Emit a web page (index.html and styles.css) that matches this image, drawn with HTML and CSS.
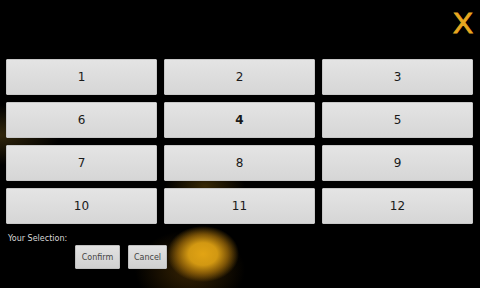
FILE: index.html
```html
<!DOCTYPE html>
<html>
<head>
  <title>Select Number</title>
  <link rel="stylesheet" href="styles.css">
</head>
<body>
  <div id="app">
    <div class="top-bar">
      <span class="close-x">X</span>
    </div>
    <div class="number-grid">
      <button class="num">1</button>
      <button class="num">2</button>
      <button class="num">3</button>
      <button class="num">6</button>
      <button class="num bold">4</button>
      <button class="num">5</button>
      <button class="num">7</button>
      <button class="num">8</button>
      <button class="num">9</button>
      <button class="num">10</button>
      <button class="num">11</button>
      <button class="num">12</button>
    </div>
    <div class="selection-label">Your Selection:</div>
    <div class="actions">
      <button class="small-btn confirm">Confirm</button>
      <button class="small-btn cancel">Cancel</button>
    </div>
  </div>
</body>
</html>
```
FILE: styles.css
```css
html, body {
  height: 100%;
}
body {
  margin: 0;
  padding: 0;
  font-family: "DejaVu Sans", sans-serif;
  background-color: #000;
  background-image:
    radial-gradient(ellipse 36px 28px at 203px 254px, #e2a414 0%, #d29812 40%, rgba(170,115,10,0.7) 70%, rgba(0,0,0,0) 100%),
    radial-gradient(ellipse 55px 40px at 190px 270px, rgba(110,70,5,0.5) 0%, rgba(0,0,0,0) 100%),
    radial-gradient(ellipse 60px 30px at 0px 135px, rgba(90,70,20,0.55) 0%, rgba(0,0,0,0) 100%),
    radial-gradient(ellipse 40px 20px at 205px 186px, rgba(110,80,10,0.5) 0%, rgba(0,0,0,0) 100%);
  background-repeat: no-repeat;
  overflow: hidden;
}
#app {
  width: 480px;
  height: 288px;
}
.top-bar {
  height: 59px;
  display: flex;
  justify-content: flex-end;
  align-items: flex-start;
}
.close-x {
  color: #e8a820;
  font-family: "Liberation Sans", sans-serif;
  font-size: 30px;
  line-height: 1;
  -webkit-text-stroke: 0.9px #e8a820;
  margin-top: 8px;
  margin-right: 7px;
}
.number-grid {
  display: grid;
  grid-template-columns: repeat(3, 1fr);
  grid-auto-rows: 36px;
  column-gap: 7px;
  row-gap: 7px;
  width: 467px;
  margin-left: 6px;
}
.num {
  border: 1px solid #c8c8c8;
  border-radius: 1px;
  background: linear-gradient(#e4e4e4, #d6d6d6);
  color: #1a1a1a;
  font-family: "DejaVu Sans", sans-serif;
  font-size: 12px;
  padding: 0;
}
.num.bold {
  font-weight: bold;
}
.selection-label {
  color: #d8d8d8;
  font-size: 8px;
  margin-top: 9px;
  margin-left: 8px;
  line-height: 11px;
}
.actions {
  display: flex;
  gap: 8px;
  margin-top: 1px;
  padding-left: 75px;
}
.small-btn {
  height: 24px;
  padding: 0;
  border: 1px solid #c0c0c0;
  border-radius: 1px;
  background: linear-gradient(#e2e2e2, #d0d0d0);
  color: #444;
  font-family: "DejaVu Sans", sans-serif;
  font-size: 8px;
}
.confirm {
  width: 45px;
}
.cancel {
  width: 39px;
}
```
